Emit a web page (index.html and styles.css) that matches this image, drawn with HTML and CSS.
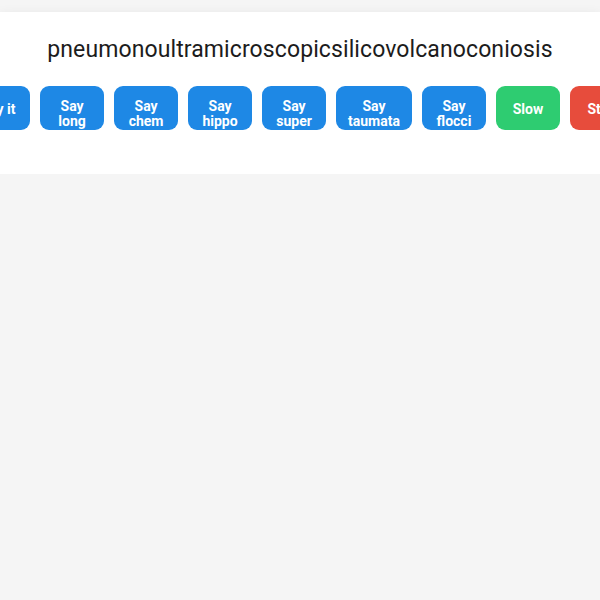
FILE: index.html
```html
<!DOCTYPE html>
<html>
<head>
    <meta charset="UTF-8">
    <title>Say the word</title>
    <link rel="stylesheet" href="styles.css">
</head>
<body>
    <div class="speaker-card">
        <div class="word" id="word">pneumonoultramicroscopicsilicovolcanoconiosis</div>

        <div class="controls">
            <button class="btn">Say it</button>
            <button class="btn">Say long</button>
            <button class="btn">Say chem</button>
            <button class="btn">Say hippo</button>
            <button class="btn">Say super</button>
            <button class="btn">Say taumata</button>
            <button class="btn">Say flocci</button>
            <button class="btn btn-slow">Slow</button>
            <button class="btn btn-stop">Stop</button>
        </div>
    </div>
</body>
</html>
```

FILE: styles.css
```css
body {
    margin: 0;
    font-family: 'Roboto', 'Liberation Sans', sans-serif;
    background: #f5f5f5;
    color: #1c1c1c;
    overflow: hidden;
}

.speaker-card {
    margin-top: 12px;
    padding: 25px 0 44px;
    background: #fff;
    box-shadow: 0 4px 12px rgba(0, 0, 0, 0.1);
    overflow: hidden;
}

.word {
    font-size: 23px;
    line-height: 26px;
    text-align: center;
    letter-spacing: 0.1px;
}

.controls {
    display: flex;
    justify-content: center;
    gap: 10px;
    margin-top: 23px;
}

/* fixed height: two-line labels spill down from the top padding */
.btn {
    flex: 0 0 64px;
    box-sizing: border-box;
    height: 44px;
    padding: 13px 12px 11px;
    display: flex;
    flex-direction: column;
    justify-content: safe center;
    border: none;
    border-radius: 9px;
    background: #1e88e5;
    color: #fff;
    font-family: inherit;
    font-size: 14px;
    font-weight: bold;
    line-height: 15px;
    text-align: center;
}

.btn-slow {
    background: #2ecc71;
}

.btn-stop {
    background: #e74c3c;
}
```
